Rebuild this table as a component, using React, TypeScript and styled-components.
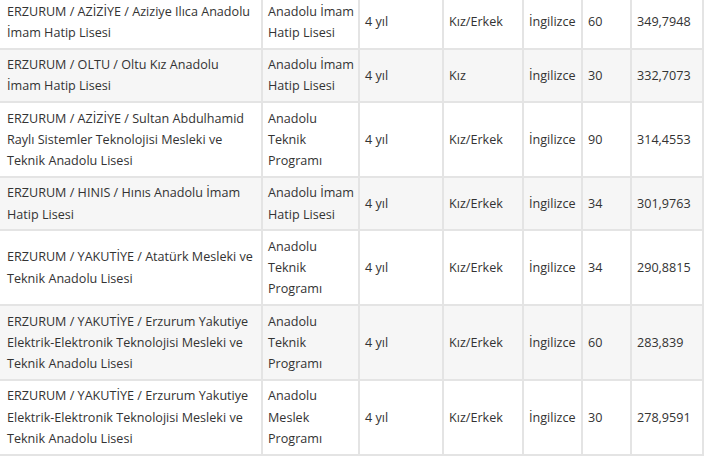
import React from "react";
import styled, { createGlobalStyle } from "styled-components";

const GlobalStyle = createGlobalStyle`
  html, body {
    margin: 0;
    padding: 0;
    background: #ffffff;
    overflow: hidden;
  }
`;

interface School {
  name: string;
  type: string;
  duration: string;
  gender: string;
  language: string;
  quota: string;
  score: string;
}

const schools: School[] = [
  {
    name: "ERZURUM / AZİZİYE / Aziziye Ilıca Anadolu İmam Hatip Lisesi",
    type: "Anadolu İmam Hatip Lisesi",
    duration: "4 yıl",
    gender: "Kız/Erkek",
    language: "İngilizce",
    quota: "60",
    score: "349,7948",
  },
  {
    name: "ERZURUM / OLTU / Oltu Kız Anadolu İmam Hatip Lisesi",
    type: "Anadolu İmam Hatip Lisesi",
    duration: "4 yıl",
    gender: "Kız",
    language: "İngilizce",
    quota: "30",
    score: "332,7073",
  },
  {
    name: "ERZURUM / AZİZİYE / Sultan Abdulhamid Raylı Sistemler Teknolojisi Mesleki ve Teknik Anadolu Lisesi",
    type: "Anadolu Teknik Programı",
    duration: "4 yıl",
    gender: "Kız/Erkek",
    language: "İngilizce",
    quota: "90",
    score: "314,4553",
  },
  {
    name: "ERZURUM / HINIS / Hınıs Anadolu İmam Hatip Lisesi",
    type: "Anadolu İmam Hatip Lisesi",
    duration: "4 yıl",
    gender: "Kız/Erkek",
    language: "İngilizce",
    quota: "34",
    score: "301,9763",
  },
  {
    name: "ERZURUM / YAKUTİYE / Atatürk Mesleki ve Teknik Anadolu Lisesi",
    type: "Anadolu Teknik Programı",
    duration: "4 yıl",
    gender: "Kız/Erkek",
    language: "İngilizce",
    quota: "34",
    score: "290,8815",
  },
  {
    name: "ERZURUM / YAKUTİYE / Erzurum Yakutiye Elektrik-Elektronik Teknolojisi Mesleki ve Teknik Anadolu Lisesi",
    type: "Anadolu Teknik Programı",
    duration: "4 yıl",
    gender: "Kız/Erkek",
    language: "İngilizce",
    quota: "60",
    score: "283,839",
  },
  {
    name: "ERZURUM / YAKUTİYE / Erzurum Yakutiye Elektrik-Elektronik Teknolojisi Mesleki ve Teknik Anadolu Lisesi",
    type: "Anadolu Meslek Programı",
    duration: "4 yıl",
    gender: "Kız/Erkek",
    language: "İngilizce",
    quota: "30",
    score: "278,9591",
  },
];

const Table = styled.div`
  display: grid;
  grid-template-columns: 261px 95px 82px 78px 57px 47px 70px;
  gap: 2px;
  padding: 0 2px 2px 0;
  margin-top: -4px;
  width: 704px;
  box-sizing: border-box;
  background: #e4e4e4;
  font-family: "Open Sans", "Noto Sans", sans-serif;
  font-size: 12.6px;
  line-height: 21.25px;
  color: #333333;
`;

const Cell = styled.div<{ $shaded: boolean; $first?: boolean }>`
  display: flex;
  align-items: center;
  padding: 4.5px ${(p) => (p.$first ? "8px" : "1px")} 4.5px
    ${(p) => (p.$first ? "7px" : "5px")};
  background: ${(p) => (p.$shaded ? "#f6f6f6" : "#ffffff")};
  min-width: 0;
`;

export default function App() {
  return (
    <>
      <GlobalStyle />
      <Table>
        {schools.map((s, i) => {
          const shaded = i % 2 === 1;
          return (
            <React.Fragment key={i}>
              <Cell $shaded={shaded} $first>{s.name}</Cell>
              <Cell $shaded={shaded}>{s.type}</Cell>
              <Cell $shaded={shaded}>{s.duration}</Cell>
              <Cell $shaded={shaded}>{s.gender}</Cell>
              <Cell $shaded={shaded}>{s.language}</Cell>
              <Cell $shaded={shaded}>{s.quota}</Cell>
              <Cell $shaded={shaded}>{s.score}</Cell>
            </React.Fragment>
          );
        })}
      </Table>
    </>
  );
}
